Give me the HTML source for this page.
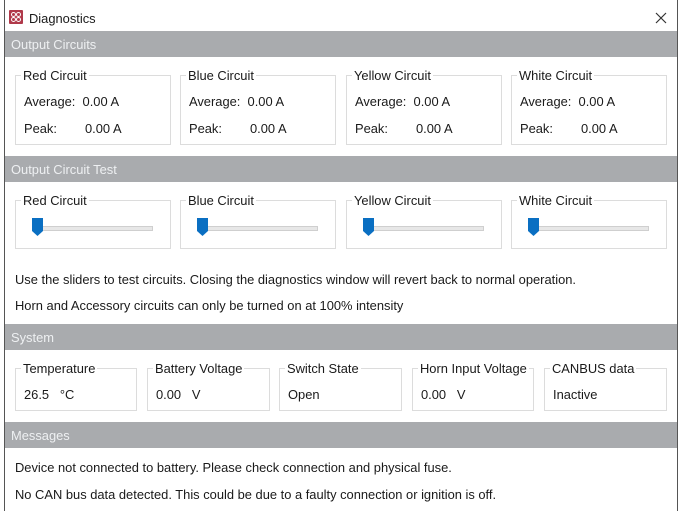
<!DOCTYPE html>
<html><head><meta charset="utf-8"><style>
*{margin:0;padding:0;box-sizing:border-box}
body{width:685px;height:519px;background:#fff;position:relative;overflow:hidden;font-family:"Liberation Sans",Arial,sans-serif;font-size:12.9px;color:#1a1a1a}
.a{position:absolute;white-space:nowrap}
.win{position:absolute;left:4px;top:0;width:674px;height:511px;border-left:1px solid #555;border-right:1px solid #555}
.band{position:absolute;left:5px;width:672px;height:26px;background:#a9abae;color:#eef0f2;font-size:12.9px;padding:6px 0 0 6px}
.box{position:absolute;border:1px solid #dcdcdc}
.t{position:absolute;top:-8px;left:5px;background:#fff;padding:0 2px;font-size:12.9px}
.sl{position:absolute;left:17px;top:25px;width:120px;height:5px;border:1px solid #cfcfcf;background:#e7e7e7}
.th{position:absolute;left:16px;top:17px;width:11px;height:18px}
</style></head><body>
<div class="win"></div>
<div class="a" style="left:9px;top:10px;width:14px;height:14px;background:#b0394a;border-radius:1px"><svg width="14" height="14"><circle cx="4.5" cy="4.5" r="2" fill="none" stroke="#fff" stroke-width="1"/><circle cx="9.5" cy="4.5" r="2" fill="none" stroke="#fff" stroke-width="1"/><circle cx="4.5" cy="9.5" r="2" fill="none" stroke="#fff" stroke-width="1"/><circle cx="9.5" cy="9.5" r="2" fill="none" stroke="#fff" stroke-width="1"/></svg></div>
<div class="a" style="left:29px;top:11px">Diagnostics</div>
<svg class="a" style="left:655px;top:12px" width="12" height="12"><path d="M1 1L11 11M11 1L1 11" stroke="#333" stroke-width="1.2"/></svg>

<div class="band" style="top:31px">Output Circuits</div>
<div class="box" style="left:15px;top:75px;width:156px;height:70px"><span class="t">Red Circuit</span><span class="a" style="left:8px;top:18px">Average:&nbsp; 0.00 A</span><span class="a" style="left:8px;top:45px">Peak:</span><span class="a" style="left:69px;top:45px">0.00 A</span></div>
<div class="box" style="left:180px;top:75px;width:156px;height:70px"><span class="t">Blue Circuit</span><span class="a" style="left:8px;top:18px">Average:&nbsp; 0.00 A</span><span class="a" style="left:8px;top:45px">Peak:</span><span class="a" style="left:69px;top:45px">0.00 A</span></div>
<div class="box" style="left:346px;top:75px;width:156px;height:70px"><span class="t">Yellow Circuit</span><span class="a" style="left:8px;top:18px">Average:&nbsp; 0.00 A</span><span class="a" style="left:8px;top:45px">Peak:</span><span class="a" style="left:69px;top:45px">0.00 A</span></div>
<div class="box" style="left:511px;top:75px;width:156px;height:70px"><span class="t">White Circuit</span><span class="a" style="left:8px;top:18px">Average:&nbsp; 0.00 A</span><span class="a" style="left:8px;top:45px">Peak:</span><span class="a" style="left:69px;top:45px">0.00 A</span></div>

<div class="band" style="top:156px">Output Circuit Test</div>
<div class="box" style="left:15px;top:200px;width:156px;height:49px"><span class="t">Red Circuit</span><div class="sl"></div><svg class="th" viewBox="0 0 11 18"><path d="M0 0H11V13L5.5 18L0 13Z" fill="#0a6fc2"/></svg></div>
<div class="box" style="left:180px;top:200px;width:156px;height:49px"><span class="t">Blue Circuit</span><div class="sl"></div><svg class="th" viewBox="0 0 11 18"><path d="M0 0H11V13L5.5 18L0 13Z" fill="#0a6fc2"/></svg></div>
<div class="box" style="left:346px;top:200px;width:156px;height:49px"><span class="t">Yellow Circuit</span><div class="sl"></div><svg class="th" viewBox="0 0 11 18"><path d="M0 0H11V13L5.5 18L0 13Z" fill="#0a6fc2"/></svg></div>
<div class="box" style="left:511px;top:200px;width:156px;height:49px"><span class="t">White Circuit</span><div class="sl"></div><svg class="th" viewBox="0 0 11 18"><path d="M0 0H11V13L5.5 18L0 13Z" fill="#0a6fc2"/></svg></div>
<div class="a" style="left:15px;top:272px">Use the sliders to test circuits. Closing the diagnostics window will revert back to normal operation.</div>
<div class="a" style="left:15px;top:298px">Horn and Accessory circuits can only be turned on at 100% intensity</div>

<div class="band" style="top:324px">System</div>
<div class="box" style="left:15px;top:368px;width:122px;height:43px"><span class="t">Temperature</span><span class="a" style="left:8px;top:18px">26.5 &nbsp; °C</span></div>
<div class="box" style="left:147px;top:368px;width:123px;height:43px"><span class="t">Battery Voltage</span><span class="a" style="left:8px;top:18px">0.00 &nbsp; V</span></div>
<div class="box" style="left:279px;top:368px;width:123px;height:43px"><span class="t">Switch State</span><span class="a" style="left:8px;top:18px">Open</span></div>
<div class="box" style="left:412px;top:368px;width:122px;height:43px"><span class="t">Horn Input Voltage</span><span class="a" style="left:8px;top:18px">0.00 &nbsp; V</span></div>
<div class="box" style="left:544px;top:368px;width:123px;height:43px"><span class="t">CANBUS data</span><span class="a" style="left:8px;top:18px">Inactive</span></div>

<div class="band" style="top:422px">Messages</div>
<div class="a" style="left:15px;top:460px">Device not connected to battery. Please check connection and physical fuse.</div>
<div class="a" style="left:15px;top:487px">No CAN bus data detected. This could be due to a faulty connection or ignition is off.</div>
</body></html>
